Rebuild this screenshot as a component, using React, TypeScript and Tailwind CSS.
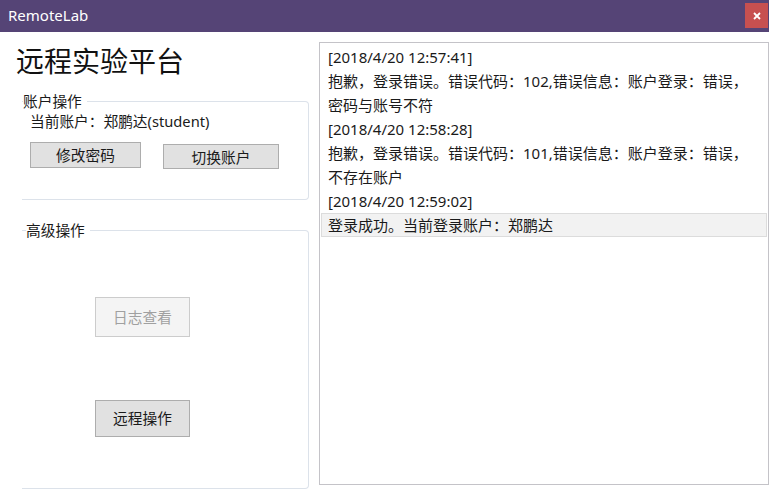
import React from 'react';

const font = { fontFamily: '"Noto Sans", "Noto Sans CJK SC", sans-serif' };

function GroupBox({ label, labelLeft, className, children }: { label: string; labelLeft: string; className: string; children: React.ReactNode }) {
  return (
    <div className={`relative ml-[22px] w-[287px] border-t border-r border-b border-[#dce2ea] rounded-r-[4px] ${className}`}>
      <span className={`absolute top-[-10px] ${labelLeft} bg-white pr-[5px] text-[14.7px] leading-[18px] text-[#1a1a1a]`}>{label}</span>
      {children}
    </div>
  );
}

export default function App() {
  const logLines = [
    '[2018/4/20 12:57:41]',
    '抱歉，登录错误。错误代码：102,错误信息：账户登录：错误，',
    '密码与账号不符',
    '[2018/4/20 12:58:28]',
    '抱歉，登录错误。错误代码：101,错误信息：账户登录：错误，',
    '不存在账户',
    '[2018/4/20 12:59:02]',
  ];

  return (
    <div className="w-[769px] h-[493px] bg-white overflow-hidden" style={font}>
      {/* title bar */}
      <div className="h-[32px] bg-[#554476] flex items-start justify-between">
        <span className="pl-[8px] pt-[5px] text-white text-[15px] leading-[20px]">RemoteLab</span>
        <div className="mt-[3px] mr-[1px] w-[23px] h-[25px] bg-[#c75050] flex items-center justify-center">
          <svg width="8" height="8" viewBox="0 0 8 8">
            <path d="M1 1 L7 7 M7 1 L1 7" stroke="white" strokeWidth="1.8" />
          </svg>
        </div>
      </div>

      <div className="flex">
        {/* left column */}
        <div className="w-[309px] flex flex-col">
          <div className="mt-[12px] pl-[16px] h-[34px] text-[28px] leading-[34px] text-[#111]">远程实验平台</div>

          <GroupBox label="账户操作" labelLeft="left-[1px]" className="mt-[23px] h-[99px]">
            <div className="pt-[9px] pl-[8px] text-[14.7px] leading-[20px] text-[#1a1a1a]">当前账户：郑鹏达(student)</div>
            <div className="mt-[11px] pl-[8px] flex items-start">
              <button className="w-[111px] h-[26px] bg-[#e1e1e1] border border-[#adadad] text-[14.7px] leading-[20px] text-[#1a1a1a]">修改密码</button>
              <button className="ml-[22px] mt-[2px] w-[116px] h-[25px] bg-[#e1e1e1] border border-[#adadad] text-[14.7px] leading-[20px] text-[#1a1a1a]">切换账户</button>
            </div>
          </GroupBox>

          <GroupBox label="高级操作" labelLeft="left-[4px]" className="mt-[30px] h-[259px]">
            <div className="pt-[66px] pl-[73px] flex flex-col items-start">
              <button className="w-[95px] h-[40px] bg-[#f4f4f4] border border-[#cccccc] text-[14.7px] text-[#a0a0a0]">日志查看</button>
              <button className="mt-[63px] w-[95px] h-[37px] bg-[#e1e1e1] border border-[#adadad] text-[14.7px] text-[#1a1a1a]">远程操作</button>
            </div>
          </GroupBox>
        </div>

        {/* log panel */}
        <div className="ml-[10px] mt-[10px] w-[450px] h-[443px] border border-[#c4c3c8] pt-[2px]">
          {logLines.map((line, i) => (
            <div key={i} className="pl-[8px] h-[24px] text-[15px] leading-[24px] text-[#1a1a1a] whitespace-nowrap">{line}</div>
          ))}
          <div className="mx-[1px] h-[24px] border border-[#dcdcdc] bg-[#f2f2f2] pl-[6px] text-[15px] leading-[22px] text-[#1a1a1a]">登录成功。当前登录账户：郑鹏达</div>
        </div>
      </div>
    </div>
  );
}
